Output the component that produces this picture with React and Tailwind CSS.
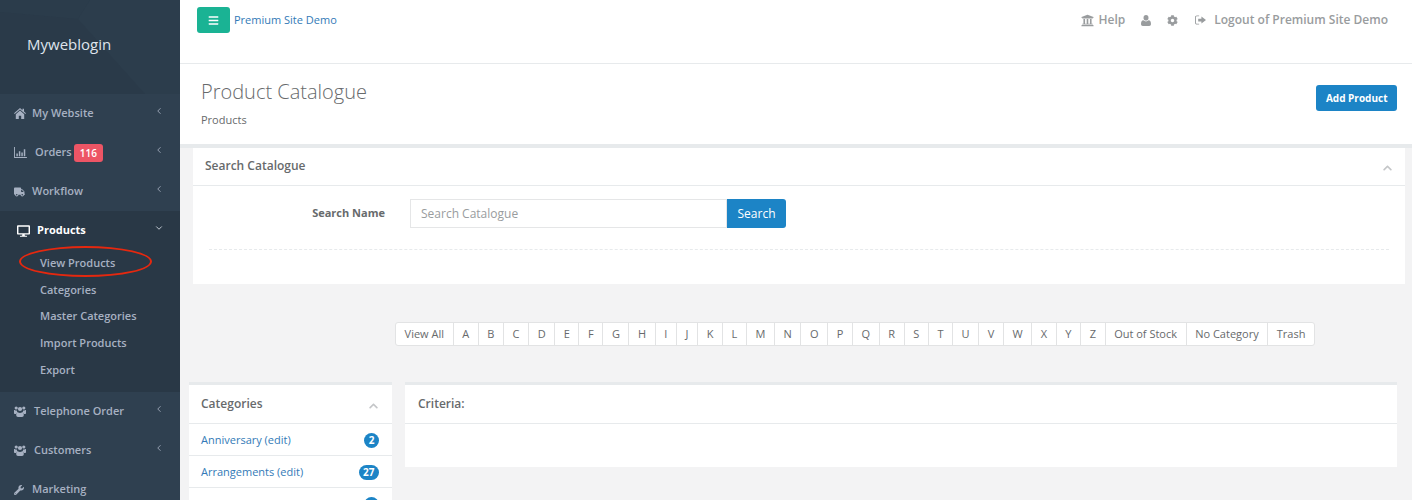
import { FaTruck, FaDesktop, FaWrench, FaUniversity, FaCog, FaBars, FaChevronUp } from "react-icons/fa";
import { LuChevronLeft, LuChevronDown } from "react-icons/lu";

const letters = "ABCDEFGHIJKLMNOPQRSTUVWXYZ".split("");
const filters = ["View All", ...letters, "Out of Stock", "No Category", "Trash"];

function BarChartIcon({ className }) {
  return (
    <svg viewBox="0 0 14 12" className={className} fill="currentColor" aria-hidden>
      <path d="M0 0h1v11h13v1H0z" />
      <path d="M2.5 7h1.6v3H2.5zM5.2 4.5h1.6V10H5.2zM7.9 6h1.6v4H7.9zM10.6 2.5h1.6V10h-1.6z" />
    </svg>
  );
}

// FontAwesome 4 shapes, the newer sets in react-icons draw these differently
function HomeIcon({ className }) {
  return (
    <svg viewBox="0 0 12 11" className={className} fill="currentColor" aria-hidden>
      <path d="M6 0 0 5.2l.7.8L6 1.5 11.3 6l.7-.8L10 3.5V.7H8.5V2.2z" />
      <path d="M6 2.6 1.8 6.2V11h3V7.8h2.4V11h3V6.2z" />
    </svg>
  );
}

function UsersIcon({ className }) {
  return (
    <svg viewBox="0 0 12 11" className={className} fill="currentColor" aria-hidden>
      <circle cx="2.2" cy="2" r="1.6" />
      <circle cx="9.8" cy="2" r="1.6" />
      <circle cx="6" cy="3" r="2.1" />
      <path d="M0 4.6C0 4 .6 4 1 4.3c.5.3 1.2.4 1.8.2.1.9.5 1.6 1 2C2.9 6.700 2.400 7.300 2.200 8H.8C.300 8 0 7.700 0 7.200zM12 4.600C12 4 11.400 4 11 4.300c-.5.300-1.200.400-1.800.200-.1.900-.5 1.600-1 2 .9.200 1.400.800 1.600 1.500h1.400c.5 0 .8-.3.800-.8z" />
      <path d="M3.800 6.200c.6.500 1.400.8 2.200.8s1.600-.3 2.200-.8C9.400 6.400 9.800 7.600 9.800 9c0 1.300-.7 2-1.800 2H4c-1.100 0-1.800-.7-1.800-2 0-1.400.4-2.600 1.600-2.800z" />
    </svg>
  );
}

function UserIcon({ className }) {
  return (
    <svg viewBox="0 0 10 11" className={className} fill="currentColor" aria-hidden>
      <ellipse cx="5" cy="2.800" rx="2.500" ry="2.800" />
      <path d="M2.400 5.300C3.100 6 4 6.400 5 6.400s1.900-.4 2.600-1.100C9.200 5.500 10 6.800 10 9c0 1.300-.7 2-1.800 2H1.800C.7 11 0 10.300 0 9c0-2.200.8-3.500 2.400-3.700z" />
    </svg>
  );
}

function SignOutIcon({ className }) {
  return (
    <svg viewBox="0 0 12 10" className={className} fill="currentColor" aria-hidden>
      <path d="M4.500 0v1H2C1.400 1 1 1.400 1 2v6c0 .6.400 1 1 1h2.500v1H2C.9 10 0 9.100 0 8V2C0 .9.900 0 2 0z" />
      <path d="M7 1.200 12 5 7 8.800V6.500H3.500v-3H7z" />
    </svg>
  );
}

function NavItem({ icon, label, badge, gap = "gap-[6px]", arrow = true }) {
  return (
    <div className="flex h-[39px] items-center pr-[16px] pl-[14px] text-[#a7b1c2]">
      <div className={`flex items-center ${gap}`}>
        {icon}
        <span className="text-[11px] font-semibold">{label}</span>
        {badge ? (
          <span className="-ml-[6px] rounded-[3px] bg-[#ed5565] px-[6px] py-[2px] text-[10px] leading-[14px] font-semibold text-white">
            {badge}
          </span>
        ) : null}
      </div>
      {arrow ? <LuChevronLeft className="mt-[-6px] ml-auto h-[10px] w-[10px]" /> : null}
    </div>
  );
}

function Sidebar() {
  const sub = ["View Products", "Categories", "Master Categories", "Import Products", "Export"];
  return (
    <aside className="relative h-full w-[180px] shrink-0 overflow-hidden bg-[#2f4050]">
      <div className="relative h-[94px] overflow-hidden bg-[#2a3a49]">
        <svg viewBox="0 0 180 94" className="absolute inset-0 h-full w-full" aria-hidden>
          <polygon points="0,0 90,0 78,19 0,12" fill="#2b3c4b" />
          <polygon points="78,19 145,94 180,94 180,0 90,0" fill="#2c3d4c" />
        </svg>
        <div className="relative pt-[35px] pl-[27px] text-[15px] leading-[19px] text-[#dfe4ed]">Myweblogin</div>
      </div>
      <NavItem icon={<HomeIcon className="h-[11px] w-[12px]" />} label="My Website" />
      <NavItem icon={<BarChartIcon className="h-[11px] w-[13px]" />} label="Orders" badge="116" gap="gap-[8px]" />
      <NavItem icon={<FaTruck className="h-[12px] w-[11px]" />} label="Workflow" gap="gap-[7px]" />
      <div className="h-[181px] bg-[#293846]">
        <div className="flex h-[39px] items-center pr-[16px] pl-[17px] text-white">
          <FaDesktop className="mr-[7px] h-[12px] w-[13px]" />
          <span className="text-[11px] font-bold">Products</span>
          <LuChevronDown className="mt-[-6px] ml-auto h-[10px] w-[10px] text-[#dfe4ed]" />
        </div>
        <div className="flex flex-col pl-[40px]">
          {sub.map((s) => (
            <div key={s} className="flex h-[26.7px] items-center text-[11px] font-semibold text-[#a7b1c2]">
              {s}
            </div>
          ))}
        </div>
      </div>
      <NavItem icon={<UsersIcon className="h-[11px] w-[12px]" />} label="Telephone Order" gap="gap-[8px]" />
      <NavItem icon={<UsersIcon className="h-[11px] w-[12px]" />} label="Customers" gap="gap-[8px]" />
      <NavItem icon={<FaWrench className="h-[10px] w-[10px]" />} label="Marketing" gap="gap-[8px]" arrow={false} />
      {/* hand-drawn annotation */}
      <div className="absolute top-[246px] left-[19px] h-[31px] w-[133px] rounded-[50%] border-2 border-[#e5280f]" />
    </aside>
  );
}

function TopBar() {
  return (
    <div className="flex h-[64px] items-start justify-between border-b border-[#e7eaec] bg-white pt-[7px] pr-[24px] pl-[17px]">
      <div className="flex items-center gap-[4px]">
        <div className="flex h-[26px] w-[33px] items-center justify-center rounded-[3px] bg-[#1ab394] text-white">
          <FaBars className="h-[11px] w-[11px]" />
        </div>
        <span className="text-[11px] text-[#337ab7]">Premium Site Demo</span>
      </div>
      <div className="flex h-[26px] items-center text-[12px] font-semibold text-[#999c9e]">
        <FaUniversity className="h-[13px] w-[13px]" />
        <span className="ml-[5px]">Help</span>
        <UserIcon className="ml-[16px] h-[11px] w-[10px]" />
        <FaCog className="ml-[16px] h-[11px] w-[11px]" />
        <SignOutIcon className="ml-[17px] h-[10px] w-[11px]" />
        <span className="ml-[8px]">Logout of Premium Site Demo</span>
      </div>
    </div>
  );
}

function PageHeading() {
  return (
    <div className="flex h-[84px] justify-between border-b-4 border-[#e7eaec] bg-white pr-[15px] pl-[21px]">
      <div>
        <h2 className="pt-[14px] text-[20px] leading-[27px] font-light text-[#676a6c]">Product Catalogue</h2>
        <div className="mt-[7px] text-[11px] leading-[15px] text-[#676a6c]">Products</div>
      </div>
      <button className="mt-[21px] h-[26px] rounded-[3px] bg-[#1c84c6] px-[9.500px] text-[10px] font-bold text-white">
        Add Product
      </button>
    </div>
  );
}

function SearchPanel() {
  return (
    <div className="mr-[7px] ml-[13px] h-[136px] bg-white">
      <div className="flex h-[38px] items-center justify-between border-b border-[#e7eaec] px-[12px] pb-[2px]">
        <span className="text-[12px] font-semibold text-[#676a6c]">Search Catalogue</span>
        <FaChevronUp className="mt-[4px] h-[10px] w-[11px] text-[#c4c6c8]" />
      </div>
      <div className="mx-[16px] flex h-[64px] items-start border-b border-dashed border-[#e7eaec] pt-[13px]">
        <div className="flex h-[29px] w-[176px] items-center justify-end text-[11px] font-bold text-[#676a6c]">
          Search Name
        </div>
        <div className="ml-[25px] flex">
          <div className="flex h-[29px] w-[317px] items-center border border-[#e5e6e7] pl-[10px] text-[12px] text-[#999c9e]">
            Search Catalogue
          </div>
          <button className="h-[29px] w-[59px] rounded-r-[3px] bg-[#1c84c6] text-[12px] text-white">Search</button>
        </div>
      </div>
    </div>
  );
}

function AlphaFilter() {
  return (
    <div className="mt-[38px] flex justify-start pl-[215px]">
      <div className="flex h-[24px] overflow-hidden rounded-[3px] border border-[#e2e3e4] bg-white">
        {filters.map((f, i) => (
          <div
            key={f}
            className={`flex items-center px-[8.580px] pt-[1px] text-[11px] text-[#676a6c] ${i ? "border-l border-[#e2e3e4]" : ""}`}
          >
            {f}
          </div>
        ))}
      </div>
    </div>
  );
}

function CategoryRow({ name, count }) {
  return (
    <div className="flex h-[32px] items-center justify-between border-b border-[#e7eaec] pt-[1px] pr-[13px] pl-[12px]">
      <span className="text-[11px] text-[#337ab7]">{name} (edit)</span>
      <span className="flex h-[15px] min-w-[15px] items-center justify-center rounded-full bg-[#1c84c6] px-[4.500px] text-[10px] font-bold text-white">
        {count}
      </span>
    </div>
  );
}

function BottomPanels() {
  return (
    <div className="mt-[36px] flex items-start gap-[13px] pr-[15px] pl-[9px]">
      <div className="w-[203px] shrink-0 border-t-[3px] border-[#e7eaec] bg-white">
        <div className="flex h-[39px] items-center justify-between border-b border-[#e7eaec] pr-[13px] pl-[12px]">
          <span className="text-[12px] font-semibold text-[#676a6c]">Categories</span>
          <FaChevronUp className="mt-[3px] h-[10px] w-[11px] text-[#c4c6c8]" />
        </div>
        <CategoryRow name="Anniversary" count="2" />
        <CategoryRow name="Arrangements" count="27" />
        <div className="flex h-[32px] justify-end pt-[9px] pr-[13px]">
          <span className="h-[15px] w-[15px] rounded-full bg-[#1c84c6]" />
        </div>
      </div>
      <div className="flex-1 border-t-[3px] border-[#e7eaec] bg-white">
        <div className="flex h-[39px] items-center border-b border-[#e7eaec] pl-[13px]">
          <span className="text-[12px] font-semibold text-[#676a6c]">Criteria:</span>
        </div>
        <div className="h-[43px]" />
      </div>
    </div>
  );
}

export default function App() {
  return (
    <div className="flex h-screen overflow-hidden bg-[#f3f3f4] font-['Open_Sans',sans-serif]">
      <Sidebar />
      <main className="min-w-0 flex-1">
        <TopBar />
        <PageHeading />
        <SearchPanel />
        <AlphaFilter />
        <BottomPanels />
      </main>
    </div>
  );
}
